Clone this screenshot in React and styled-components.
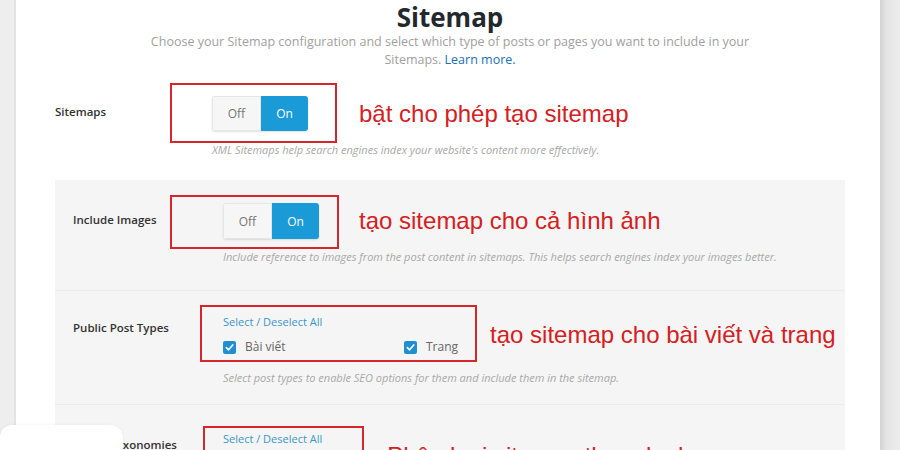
import React from 'react';
import styled, { createGlobalStyle } from 'styled-components';

const GlobalStyle = createGlobalStyle`
  * { box-sizing: border-box; }
  body {
    margin: 0;
    background: #efefef;
    font-family: "Open Sans", "Liberation Sans", sans-serif;
  }
`;

const Page = styled.div`
  position: relative;
  width: 900px;
  height: 450px;
  overflow: hidden;
  display: flex;
  background: #efefef;
`;

const LeftEdge = styled.div`
  width: 16px;
  flex-shrink: 0;
  background: #eeeeee;
  border-right: 2px solid #e3e3e3;
`;

const RightEdge = styled.div`
  flex: 1;
  background: linear-gradient(to right, #d2d2d2, #e4e4e4 30%, #ececec);
`;

const Panel = styled.div`
  width: 864px;
  flex-shrink: 0;
  background: #ffffff;
  padding: 2px 35px 0 39px;
`;

const Header = styled.header`
  text-align: center;
`;

const Title = styled.h1`
  margin: 0;
  font-size: 26px;
  line-height: 30px;
  font-weight: 700;
  color: #23282d;
`;

const Intro = styled.p`
  margin: 1px auto 0;
  width: 625px;
  font-size: 12.5px;
  line-height: 18px;
  color: #a0a0a0;
`;

const Link = styled.a`
  color: #2271b1;
  text-decoration: none;
`;

const Row = styled.div`
  display: grid;
  grid-template-columns: ${p => p.$labelWidth}px 1fr;
  align-items: start;
  padding: ${p => p.$pad};
  border-bottom: ${p => (p.$divider ? '1px solid #ececec' : 'none')};
`;

const Label = styled.div`
  padding-top: ${p => p.$offset}px;
  font-size: 11.5px;
  line-height: 16px;
  font-weight: 600;
  color: #333333;
`;

const Field = styled.div`
  display: flex;
  flex-direction: column;
`;

const Line = styled.div`
  display: flex;
  align-items: center;
`;

const Marked = styled.div`
  position: relative;
`;

const RedBox = styled.div`
  position: absolute;
  inset: ${p => p.$inset};
  border: 2px solid #d7262b;
  pointer-events: none;
`;

const Note = styled.span`
  margin-left: ${p => p.$gap}px;
  margin-top: ${p => p.$drop || 0}px;
  font-family: "Liberation Sans", Arial, sans-serif;
  font-size: 24px;
  line-height: 28px;
  color: #d4201f;
  white-space: nowrap;
`;

const Toggle = styled.div`
  display: flex;
  height: ${p => p.$h}px;
  border-radius: 3px;
  box-shadow: 0 1px 2px rgba(0, 0, 0, 0.12);
  overflow: hidden;
`;

const Segment = styled.div`
  width: ${p => p.$w}px;
  display: flex;
  align-items: center;
  justify-content: center;
  font-size: 12px;
  background: ${p => (p.$active ? '#1b9ad8' : '#f6f6f6')};
  color: ${p => (p.$active ? '#ffffff' : '#777777')};
  border: ${p => (p.$active ? 'none' : '1px solid #e6e6e6')};
`;

const Hint = styled.div`
  margin-top: ${p => p.$top}px;
  font-size: 11px;
  line-height: 14px;
  font-style: italic;
  color: #a8a8a8;
  white-space: nowrap;
`;

const Section = styled.div`
  background: #f5f5f5;
  margin-top: 23px;
  height: 400px;
`;

const SelectAll = styled.a`
  display: block;
  font-size: 11px;
  line-height: 16px;
  color: #3b96cc;
  text-decoration: none;
`;

const Options = styled.div`
  display: grid;
  grid-template-columns: ${p => p.$cols};
  margin-top: 8px;
`;

const Option = styled.label`
  display: flex;
  align-items: center;
  gap: 9px;
  font-size: 12px;
  line-height: 18px;
  color: #666666;
`;

const Box = styled.span`
  width: 13px;
  height: 13px;
  border-radius: 2px;
  background: #1e8fd0;
  display: flex;
  align-items: center;
  justify-content: center;
`;

const Cover = styled.div`
  position: absolute;
  left: 0;
  top: 425px;
  width: 123px;
  height: 40px;
  background: #ffffff;
  border-radius: 12px;
  box-shadow: 0 0 3px rgba(0, 0, 0, 0.06);
`;

const Check = () => (
  <Box>
    <svg width="9" height="9" viewBox="0 0 10 10">
      <path d="M1.5 5.2 L4 7.6 L8.6 2.2" fill="none" stroke="#fff" strokeWidth="1.8" strokeLinecap="round" strokeLinejoin="round" />
    </svg>
  </Box>
);

const OnOff = ({ h }) => (
  <Toggle $h={h}>
    <Segment $w={49}>Off</Segment>
    <Segment $w={47} $active>On</Segment>
  </Toggle>
);

export default function App() {
  return (
    <>
      <GlobalStyle />
      <Page>
        <LeftEdge />
        <Panel>
          <Header>
            <Title>Sitemap</Title>
            <Intro>
              Choose your Sitemap configuration and select which type of posts or pages you want to include in your
              Sitemaps. <Link href="#">Learn more.</Link>
            </Intro>
          </Header>

          <Row $labelWidth={157} $pad="27px 0 0 0">
            <Label $offset={8}>Sitemaps</Label>
            <Field>
              <Line>
                <Marked>
                  <OnOff h={35} />
                  <RedBox $inset="-13px -29px -12px -42px" />
                </Marked>
                <Note $gap={51}>bật cho phép tạo sitemap</Note>
              </Line>
              <Hint $top={12}>XML Sitemaps help search engines index your website's content more effectively.</Hint>
            </Field>
          </Row>

          <Section>
            <Row $labelWidth={150} $pad="23px 0 26px 18px" $divider>
              <Label $offset={9}>Include Images</Label>
              <Field>
                <Line>
                  <Marked>
                    <OnOff h={36} />
                    <RedBox $inset="-8px -20px -10px -53px" />
                  </Marked>
                  <Note $gap={40}>tạo sitemap cho cả hình ảnh</Note>
                </Line>
                <Hint $top={11}>Include reference to images from the post content in sitemaps. This helps search engines index your images better.</Hint>
              </Field>
            </Row>

            <Row $labelWidth={150} $pad="23px 0 19px 18px" $divider>
              <Label $offset={6}>Public Post Types</Label>
              <Field>
                <Line>
                  <Marked>
                    <SelectAll href="#">Select / Deselect All</SelectAll>
                    <Options $cols="181px auto">
                      <Option><Check />Bài viết</Option>
                      <Option><Check />Trang</Option>
                    </Options>
                    <RedBox $inset="-9px -19px -6px -23px" />
                  </Marked>
                  <Note $gap={32}>tạo sitemap cho bài viết và trang</Note>
                </Line>
                <Hint $top={15}>Select post types to enable SEO options for them and include them in the sitemap.</Hint>
              </Field>
            </Row>

            <Row $labelWidth={150} $pad="26px 0 20px 18px">
              <Label $offset={6}>Public Taxonomies</Label>
              <Field>
                <Line>
                  <Marked>
                    <SelectAll href="#">Select / Deselect All</SelectAll>
                    <Options $cols="auto">
                      <Option><Check />Danh mục</Option>
                    </Options>
                    <RedBox $inset="-5px -42px -6px -20px" />
                  </Marked>
                  <Note $gap={65} $drop={8}>Phân loại sitemap theo danh mục</Note>
                </Line>
              </Field>
            </Row>
          </Section>
        </Panel>
        <RightEdge />
        <Cover />
      </Page>
    </>
  );
}
